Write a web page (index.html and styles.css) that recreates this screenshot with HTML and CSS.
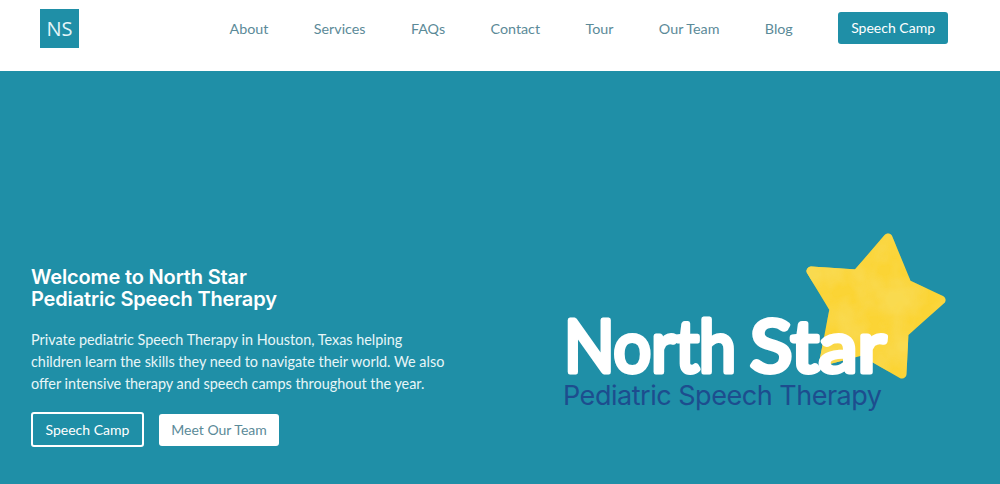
FILE: index.html
```html
<!DOCTYPE html>
<html lang="en">
<head>
  <meta charset="UTF-8">
  <meta name="viewport" content="width=device-width, initial-scale=1.0">
  <title>North Star Pediatric Speech Therapy</title>
  <link rel="stylesheet" href="styles.css">
</head>
<body>
  <!-- Top navigation -->
  <header class="site-header">
    <a class="brand" href="#">NS</a>
    <nav class="main-nav">
      <a href="#">About</a>
      <a href="#">Services</a>
      <a href="#">FAQs</a>
      <a href="#">Contact</a>
      <a href="#">Tour</a>
      <a href="#">Our Team</a>
      <a href="#">Blog</a>
      <a class="btn btn-solid" href="#">Speech Camp</a>
    </nav>
  </header>

  <!-- Hero -->
  <section class="hero">
    <div class="hero-copy">
      <h1>Welcome to North Star<br>Pediatric Speech Therapy</h1>
      <p>Private pediatric Speech Therapy in Houston, Texas helping children learn the skills they need to navigate their world. We also offer intensive therapy and speech camps throughout the year.</p>
      <div class="hero-actions">
        <a class="btn btn-outline" href="#">Speech Camp</a>
        <a class="btn btn-white" href="#">Meet Our Team</a>
      </div>
    </div>

    <svg class="hero-logo" viewBox="555 225 400 195" width="400" height="195" role="img" aria-label="North Star Pediatric Speech Therapy">
      <defs>
        <filter id="watercolor" x="-10%" y="-10%" width="120%" height="120%">
          <feTurbulence type="fractalNoise" baseFrequency="0.035" numOctaves="3" seed="4"/>
          <feColorMatrix values="0 0 0 0 0.95  0 0 0 0 0.7  0 0 0 0 0.08  2 0 0 0 -0.6"/>
          <feComposite in2="SourceAlpha" operator="in" result="blotches"/>
          <feMerge>
            <feMergeNode in="SourceGraphic"/>
            <feMergeNode in="blotches"/>
          </feMerge>
        </filter>
      </defs>
      <path class="star" d="M888 238 L907 284 L941 300 L904 333 L902 374 L862 351 L824 361 L834 309 L811 271 L857 274 Z"/>
      <text class="logo-name" y="372"><tspan x="564" textLength="172" lengthAdjust="spacingAndGlyphs">North</tspan><tspan x="750" textLength="136" lengthAdjust="spacingAndGlyphs">Star</tspan></text>
      <text class="logo-sub" x="563" y="405" textLength="319">Pediatric Speech Therapy</text>
    </svg>
  </section>
</body>
</html>
```

FILE: styles.css
```css
* {
  box-sizing: border-box;
}
body {
  margin: 0;
  height: 484px;
  overflow: hidden;
  font-family: "Lato", "Open Sans", sans-serif;
  background-color: #1f8fa7;
}
a {
  text-decoration: none;
}

.site-header {
  display: flex;
  justify-content: space-between;
  align-items: flex-start;
  height: 71px;
  padding: 9px 52px 0 40px;
  background-color: #fff;
}
.brand {
  display: flex;
  align-items: center;
  justify-content: center;
  width: 39px;
  height: 39px;
  background-color: #1f8fa7;
  color: #e4f5f8;
  font-family: "Open Sans", sans-serif;
  font-size: 20px;
}
.main-nav {
  display: flex;
  align-items: center;
  gap: 45.4px;
  height: 38px;
  font-size: 14.3px;
}
.main-nav a {
  color: #5b8a98;
}
.main-nav a.btn-solid {
  color: #fff;
}

.btn {
  display: inline-block;
  border-radius: 3px;
  font-size: 14px;
}
.btn-solid {
  padding: 7px 13px;
  height: 32px;
  background-color: #1f8fa7;
}
.btn-outline {
  padding: 7px 12.5px;
  height: 35px;
  border: 2px solid #fff;
  color: #fff;
}
.btn-white {
  padding: 7px 12.5px;
  height: 32px;
  background-color: #fff;
  color: #5b8a98;
}

.hero {
  display: flex;
  justify-content: space-between;
  height: 413px;
  padding: 195px 45px 0 31px;
}
.hero-copy {
  width: 425px;
}
.hero-copy h1 {
  margin: 0 0 19px;
  font-family: "Inter", sans-serif;
  font-size: 20px;
  font-weight: 600;
  letter-spacing: -0.15px;
  line-height: 22px;
  color: #fff;
}
.hero-copy p {
  margin: 0 0 17px;
  font-size: 14.4px;
  line-height: 22px;
  color: #e8f6f8;
}
.hero-actions {
  display: flex;
  align-items: center;
  gap: 15px;
}

.hero-logo {
  margin-top: -41px;
}
.star {
  fill: #fbd436;
  stroke: #fbd436;
  stroke-width: 9;
  stroke-linejoin: round;
  filter: url(#watercolor);
}
.logo-name {
  font-family: "Lato", sans-serif;
  font-size: 72px;
  font-weight: 400;
  fill: #fff;
  stroke: #fff;
  stroke-width: 5;
  stroke-linejoin: round;
  stroke-linecap: round;
}
.logo-sub {
  font-family: "Inter", sans-serif;
  font-size: 27px;
  fill: #1d4d8e;
}
```
